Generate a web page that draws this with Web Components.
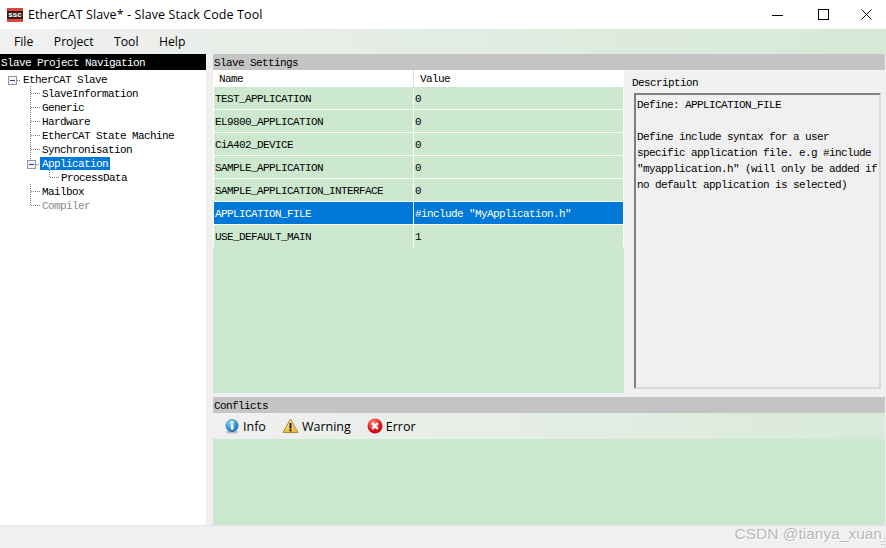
<!DOCTYPE html>
<html>
<head>
<meta charset="utf-8">
<title>EtherCAT Slave* - Slave Stack Code Tool</title>
<style>
html,body{margin:0;padding:0;height:100%;overflow:hidden;background:#f0f0f0;}
body{font-family:"Open Sans","Noto Sans",sans-serif;}
</style>
</head>
<body>
<ssc-window>
    <ssc-titlebar slot="title">EtherCAT Slave* - Slave Stack Code Tool</ssc-titlebar>
    <ssc-menubar slot="menu" items="File,Project,Tool,Help"></ssc-menubar>
    <ssc-tree slot="nav"></ssc-tree>
    <ssc-settings slot="settings"></ssc-settings>
    <ssc-conflicts slot="conflicts"></ssc-conflicts>
    <ssc-statusbar slot="status">CSDN @tianya_xuan</ssc-statusbar>
</ssc-window>

<script>
const MONO = `font-family:"Liberation Mono","DejaVu Sans Mono",monospace;font-size:11px;letter-spacing:-.6px;`;

class SscWindow extends HTMLElement {
    constructor() {
        super();
        this.attachShadow({ mode: 'open' }).innerHTML = `
        <style>
        :host{ display:grid; width:886px; height:548px; grid-template-rows:29px 25px 471px 1px 22px; background:#f0f0f0; }
        .main{ display:grid; grid-template-columns:206px 1fr; column-gap:7px; padding-right:1px; min-height:0; }
        .right{ display:grid; grid-template-rows:339px 128px; row-gap:4px; min-height:0; }
        .line{ background:#e4e4e4; }
        </style>
        <slot name="title"></slot>
        <slot name="menu"></slot>
        <div class="main">
            <slot name="nav"></slot>
            <div class="right">
                <slot name="settings"></slot>
                <slot name="conflicts"></slot>
            </div>
        </div>
        <div class="line"></div>
        <slot name="status"></slot>
        `;
    }
}

class SscTitlebar extends HTMLElement {
    constructor() {
        super();
        this.attachShadow({ mode: 'open' }).innerHTML = `
        <style>
        :host{ display:flex; align-items:center; background:#fff; color:#000; font-size:12.5px; letter-spacing:.1px; height:29px; }
        .logo{ width:16px; height:14px; margin:0 5px 0 7px; background:linear-gradient(#d8483c 0 3px,#3a1a18 3px 11px,#d8483c 11px); color:#fff; font:bold 8px/14px "Liberation Sans",sans-serif; text-align:center; flex:none; }
        .text{ flex:1; }
        .btn{ width:46px; height:29px; display:flex; align-items:center; justify-content:center; flex:none; }
        .btn:last-child{ width:40px; }
        </style>
        <span class="logo">ssc</span>
        <span class="text"><slot></slot></span>
        <span class="btn"><svg width="11" height="11" shape-rendering="crispEdges"><path d="M0 6.5h11" stroke="#000" fill="none"/></svg></span>
        <span class="btn"><svg width="11" height="11" shape-rendering="crispEdges"><path d="M.5.5h10v10H.5z" stroke="#000" fill="none"/></svg></span>
        <span class="btn"><svg width="11" height="11"><path d="M.5.5l10 10M10.5.5l-10 10" stroke="#111" fill="none"/></svg></span>
        `;
    }
}

class SscMenubar extends HTMLElement {
    constructor() {
        super();
        const items = this.getAttribute('items').split(',');
        this.attachShadow({ mode: 'open' }).innerHTML = `
        <style>
        :host{ display:flex; align-items:center; gap:20.5px; padding:0 0 1px 14px; background:linear-gradient(90deg,#f0f0f0,#d5e9d6); font-size:12.2px; color:#000; }
        </style>
        ${items.map(i => `<span>${i}</span>`).join('')}
        `;
    }
}

class SscPaneHeader extends HTMLElement {
    constructor() {
        super();
        this.attachShadow({ mode: 'open' }).innerHTML = `
        <style>
        :host{ display:block; height:16px; line-height:18px; padding-left:1px; background:#c4c4c4; color:#000; ${MONO} white-space:nowrap; overflow:hidden; }
        :host([dark]){ background:#000; color:#fff; }
        </style>
        <slot></slot>
        `;
    }
}

class SscTreeItem extends HTMLElement {
    constructor() {
        super();
        const level = +this.getAttribute('level') || 0;
        const open = this.hasAttribute('open');
        const last = this.hasAttribute('last');
        const dots = 'stroke="#808080" stroke-dasharray="1 1" fill="none" shape-rendering="crispEdges"';
        const box = x => `<path d="M${x+.5} 4.5h8v8h-8z" fill="#f1f2f7" stroke="#8f95a3" shape-rendering="crispEdges"/><path d="M${x+2} 8.5h5" stroke="#2a3f9a" shape-rendering="crispEdges"/>`;
        let guide = '', width = 0;
        if (level === 0) {
            width = 21;
            guide = box(8) + `<path d="M17 8.5h4" ${dots}/>`;
        } else if (level === 1) {
            width = 40;
            guide = `<path d="M30.5 0v${last ? 8 : 14}" ${dots}/>` + (open ? box(27) + `<path d="M36 8.5h3" ${dots}/>` : `<path d="M31 7.5h9" ${dots}/>`);
        } else {
            width = 59;
            guide = `<path d="M49.5 0v8M50 7.5h9" ${dots}/>`;
        }
        this.attachShadow({ mode: 'open' }).innerHTML = `
        <style>
        :host{ display:flex; height:14px; align-items:flex-start; color:#000; }
        :host([disabled]){ color:#8c8c8c; }
        svg{ flex:none; display:block; }
        .label{ padding:0 2px; margin-top:1px; height:13px; line-height:14px; white-space:nowrap; ${MONO} }
        :host([selected]) .label{ background:#0078d7; color:#fff; }
        </style>
        <svg width="${width}" height="14">${guide}</svg>
        <span class="label"><slot></slot></span>
        `;
    }
}

class SscTree extends HTMLElement {
    constructor() {
        super();
        this.attachShadow({ mode: 'open' }).innerHTML = `
        <style>
        :host{ display:flex; flex-direction:column; background:#fff; }
        .rows{ padding-top:2px; }
        </style>
        <ssc-pane-header dark>Slave Project Navigation</ssc-pane-header>
        <div class="rows">
            <ssc-tree-item level="0">EtherCAT Slave</ssc-tree-item>
            <ssc-tree-item level="1">SlaveInformation</ssc-tree-item>
            <ssc-tree-item level="1">Generic</ssc-tree-item>
            <ssc-tree-item level="1">Hardware</ssc-tree-item>
            <ssc-tree-item level="1">EtherCAT State Machine</ssc-tree-item>
            <ssc-tree-item level="1">Synchronisation</ssc-tree-item>
            <ssc-tree-item level="1" open selected>Application</ssc-tree-item>
            <ssc-tree-item level="2">ProcessData</ssc-tree-item>
            <ssc-tree-item level="1">Mailbox</ssc-tree-item>
            <ssc-tree-item level="1" last disabled>Compiler</ssc-tree-item>
        </div>
        `;
    }
}

class SscRow extends HTMLElement {
    constructor() {
        super();
        this.attachShadow({ mode: 'open' }).innerHTML = `
        <style>
        :host{ display:grid; grid-template-columns:199px 1fr; grid-template-rows:22px; height:22px; margin:0 1px 1px 1px; column-gap:1px; color:#000; ${MONO} white-space:nowrap; }
        :host([selected]){ color:#fff; }
        div{ background:#cce8cf; padding-left:1px; line-height:24px; }
        :host([selected]) div{ background:#0078d7; }
        </style>
        <div>${this.getAttribute('name')}</div>
        <div><slot></slot></div>
        `;
    }
}

class SscSettings extends HTMLElement {
    constructor() {
        super();
        const rows = [
            ['TEST_APPLICATION','0'],
            ['EL9800_APPLICATION','0'],
            ['CiA402_DEVICE','0'],
            ['SAMPLE_APPLICATION','0'],
            ['SAMPLE_APPLICATION_INTERFACE','0'],
            ['APPLICATION_FILE','#include "MyApplication.h"',true],
            ['USE_DEFAULT_MAIN','1']
        ];
        this.attachShadow({ mode: 'open' }).innerHTML = `
        <style>
        :host{ display:grid; grid-template-rows:16px 1fr; grid-template-columns:411px 1fr; min-height:0; }
        ssc-pane-header{ grid-column:1 / 3; }
        .table{ background:#cce8cf; min-height:0; }
        .head{ display:grid; grid-template-columns:200px 1fr; height:17px; background:#fff; ${MONO} line-height:18px; color:#000; }
        .head span{ padding-left:6px; }
        .head span+span{ border-left:1px solid #dcdcdc; padding-left:6px; }
        .rows{ background:#fff; }
        </style>
        <ssc-pane-header>Slave Settings</ssc-pane-header>
        <div class="table">
            <div class="head"><span>Name</span><span>Value</span></div>
            <div class="rows">
            ${rows.map(r => `<ssc-row name="${r[0]}"${r[2] ? ' selected' : ''}>${r[1].replace(/"/g,'&quot;')}</ssc-row>`).join('')}
            </div>
        </div>
        <ssc-description>
            <div>Define: APPLICATION_FILE</div>
            <div>&nbsp;</div>
            <div>Define include syntax for a user specific application file. e.g #include "myapplication.h" (will only be added if no default application is selected)</div>
        </ssc-description>
        `;
    }
}

class SscDescription extends HTMLElement {
    constructor() {
        super();
        this.attachShadow({ mode: 'open' }).innerHTML = `
        <style>
        :host{ display:flex; flex-direction:column; padding:5px 4px 4px 10px; background:#f0f0f0; color:#000; ${MONO} min-height:0; }
        .label{ height:18px; line-height:16px; margin-left:-2px; }
        .box{ flex:1; box-sizing:border-box; border:2px solid; border-color:#7f7f7f #d8d8d8 #d8d8d8 #7f7f7f; padding:2px 0 0 1px; line-height:16px; }
        </style>
        <div class="label">Description</div>
        <div class="box"><slot></slot></div>
        `;
    }
}

class SscConflicts extends HTMLElement {
    constructor() {
        super();
        this.attachShadow({ mode: 'open' }).innerHTML = `
        <style>
        :host{ display:grid; grid-template-rows:16px 26px 1fr; min-height:0; }
        .bar{ display:flex; align-items:center; padding-left:11px; gap:16px; background:linear-gradient(90deg,#f0f0f0,#d8ead9); font-size:12.5px; color:#000; }
        .tool{ display:flex; align-items:center; gap:3px; }
        svg{ display:block; flex:none; }
        .fill{ background:#cce8cf; }
        </style>
        <ssc-pane-header>Conflicts</ssc-pane-header>
        <div class="bar">
            <span class="tool">
                <svg width="16" height="16" viewBox="0 0 16 16">
                    <defs><radialGradient id="i" cx=".4" cy=".3" r=".8"><stop offset="0" stop-color="#9fd6f2"/><stop offset=".6" stop-color="#2f8fcb"/><stop offset="1" stop-color="#14609c"/></radialGradient></defs>
                    <ellipse cx="8" cy="14" rx="6" ry="1.6" fill="#b5bcc2"/>
                    <circle cx="8" cy="7.5" r="6.5" fill="url(#i)"/>
                    <rect x="7" y="6.5" width="2.4" height="5" fill="#fff"/>
                    <circle cx="8.2" cy="4.4" r="1.3" fill="#fff"/>
                </svg>
                <span>Info</span>
            </span>
            <span class="tool">
                <svg width="17" height="16" viewBox="0 0 17 16">
                    <defs><linearGradient id="w" x1="0" y1="0" x2="0" y2="1"><stop offset="0" stop-color="#fff3a8"/><stop offset="1" stop-color="#eeb92e"/></linearGradient></defs>
                    <path d="M8.5 1L16 14.5H1z" fill="url(#w)" stroke="#a98a3c" stroke-linejoin="round"/>
                    <rect x="7.5" y="5" width="2" height="5.5" fill="#1c1c1c"/>
                    <rect x="7.5" y="11.3" width="2" height="2" fill="#1c1c1c"/>
                </svg>
                <span>Warning</span>
            </span>
            <span class="tool">
                <svg width="16" height="16" viewBox="0 0 16 16">
                    <defs><radialGradient id="e" cx=".4" cy=".3" r=".8"><stop offset="0" stop-color="#ff8a80"/><stop offset=".6" stop-color="#e3161c"/><stop offset="1" stop-color="#b00c10"/></radialGradient></defs>
                    <circle cx="8" cy="8" r="7.5" fill="url(#e)"/>
                    <path d="M5.2 5.2l5.6 5.6M10.8 5.2l-5.6 5.6" stroke="#fff" stroke-width="2.4"/>
                </svg>
                <span>Error</span>
            </span>
        </div>
        <div class="fill"></div>
        `;
    }
}

class SscStatusbar extends HTMLElement {
    constructor() {
        super();
        this.attachShadow({ mode: 'open' }).innerHTML = `
        <style>
        :host{ display:flex; justify-content:flex-end; padding:0 4px 0 0; position:relative; background:#f0f0f0; color:#b9b9b9; font:15.5px/15px "Liberation Sans",Arial,sans-serif; text-shadow:1px 1px 0 #fff; }
        svg{ position:absolute; right:0; bottom:3px; }
        </style>
        <span><slot></slot></span>
        <svg width="7" height="7" shape-rendering="crispEdges"><path d="M5 0h1v1H5zM2 3h1v1H2zM5 3h1v1H5zM2 6h1v1H2zM5 6h1v1H5z" fill="#a0a0a0"/></svg>
        `;
    }
}

customElements.define('ssc-pane-header', SscPaneHeader);
customElements.define('ssc-tree-item', SscTreeItem);
customElements.define('ssc-tree', SscTree);
customElements.define('ssc-row', SscRow);
customElements.define('ssc-description', SscDescription);
customElements.define('ssc-settings', SscSettings);
customElements.define('ssc-conflicts', SscConflicts);
customElements.define('ssc-titlebar', SscTitlebar);
customElements.define('ssc-menubar', SscMenubar);
customElements.define('ssc-statusbar', SscStatusbar);
customElements.define('ssc-window', SscWindow);
</script>
</body>
</html>
